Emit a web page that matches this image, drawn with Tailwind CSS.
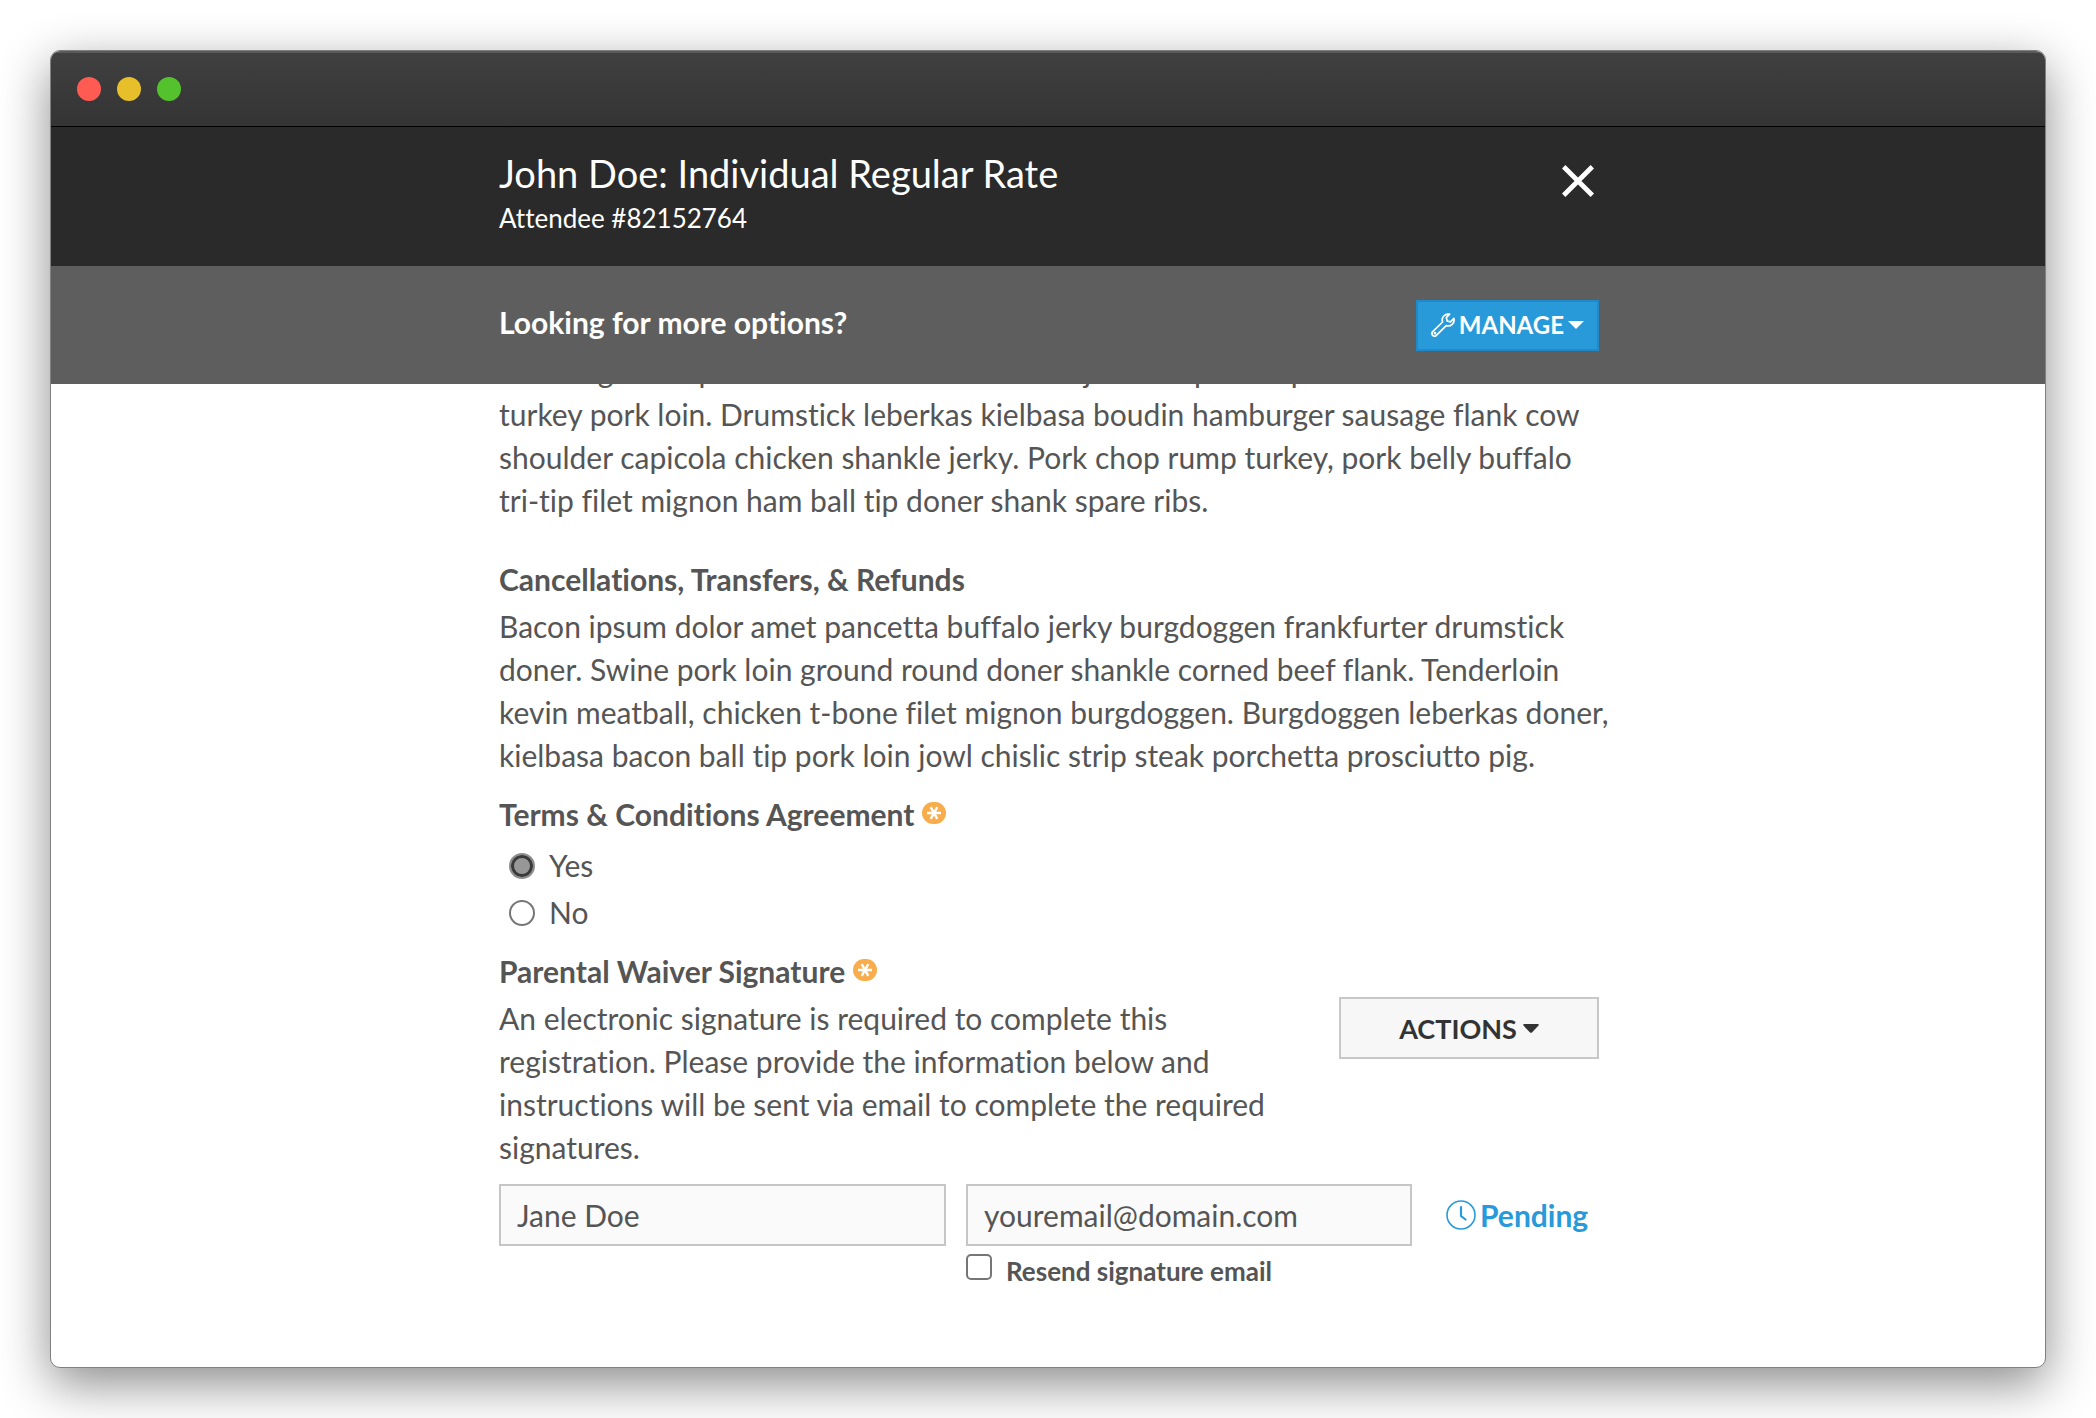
<!DOCTYPE html>
<html lang="en">
<head>
<meta charset="utf-8">
<meta name="viewport" content="width=device-width, initial-scale=1">
<title>John Doe: Individual Regular Rate</title>
<script src="https://cdn.jsdelivr.net/npm/@tailwindcss/browser@4"></script>
</head>
<body class="h-screen bg-white p-[50px] font-['Lato',sans-serif] text-[30px] leading-[43px] text-[#555] [font-variant-ligatures:none]">
<div class="flex h-full flex-col overflow-hidden rounded-[10px] border border-[#808080] bg-white shadow-[0_16px_50px_rgba(0,0,0,0.46)]">

  <div class="flex h-[76px] shrink-0 items-center gap-4 border-t-2 border-b border-t-[#5a5a5a] border-b-black bg-linear-to-b from-[#404040] to-[#343434] px-[26px] pb-0.5">
    <span class="size-6 rounded-full bg-[#ff5b53]"></span>
    <span class="size-6 rounded-full bg-[#e7bf2a]"></span>
    <span class="size-6 rounded-full bg-[#54c22c]"></span>
  </div>

  <header class="h-[139px] shrink-0 bg-[#2a2a2a] text-white">
    <div class="mx-auto flex max-w-[1102px] items-start justify-between pt-6 pl-0.5">
      <div>
        <h1 class="text-[38px] leading-11">John Doe: Individual Regular Rate</h1>
        <p class="text-[26px] leading-[46px]">Attendee #82152764</p>
      </div>
      <button type="button" aria-label="Close" class="mt-3.5 mr-[5px]">
        <svg class="block size-8" viewBox="0 0 32 32" fill="none" stroke="currentColor" stroke-width="4.8"><path d="M1.7 1.7 30.3 30.3M30.3 1.7 1.7 30.3"/></svg>
      </button>
    </div>
  </header>

  <div class="h-[118px] shrink-0 bg-[#5e5e5e] text-white">
    <div class="mx-auto flex h-full max-w-[1102px] items-center justify-between pl-0.5">
      <h2 class="pb-1.5 font-bold">Looking for more options?</h2>
      <button type="button" class="flex h-[51px] items-center gap-1 border-2 border-[#2189c7] bg-[#289ad9] px-[13px] text-[24px] leading-[30px] font-bold">
        <svg class="size-6" viewBox="0 0 24 24" fill="none" stroke="currentColor" stroke-width="1.7" stroke-linejoin="round" stroke-linecap="round"><path d="M18.6 1.2A6 6 0 0 0 11.6 9L1.7 18.7a2.6 2.6 0 0 0 3.700 3.700L15.200 12.600A6 6 0 0 0 22.900 5.400L19.500 8.800 16.200 8 15.300 4.600Z"/><circle cx="4" cy="20.200" r=".5"/></svg>
        <span>MANAGE</span>
        <svg class="h-2 w-4" viewBox="0 0 16 8" fill="currentColor"><path d="M0 0h16L8 8Z"/></svg>
      </button>
    </div>
  </div>

  <main class="min-h-0 grow overflow-hidden">
    <div class="mx-auto -mt-[34px] max-w-[1102px] pl-0.5">
      <p class="whitespace-nowrap">Brisket ground pork loin tenderloin meatball jowl tail pork capicola short ribs ham<br>turkey pork loin. Drumstick leberkas kielbasa boudin hamburger sausage flank cow<br>shoulder capicola chicken shankle jerky. Pork chop rump turkey, pork belly buffalo<br>tri-tip filet mignon ham ball tip doner shank spare ribs.</p>

      <h3 class="mt-9 font-bold">Cancellations, Transfers, &amp; Refunds</h3>
      <p class="mt-1 whitespace-nowrap">Bacon ipsum dolor amet pancetta buffalo jerky burgdoggen frankfurter drumstick<br>doner. Swine pork loin ground round doner shankle corned beef flank. Tenderloin<br>kevin meatball, chicken t-bone filet mignon burgdoggen. Burgdoggen leberkas doner,<br>kielbasa bacon ball tip pork loin jowl chislic strip steak porchetta prosciutto pig.</p>

      <fieldset class="mt-4">
        <legend class="flex items-center gap-2 font-bold">Terms &amp; Conditions Agreement
          <svg class="mb-1 h-[22px] w-6" viewBox="0 0 24 22" role="img" aria-label="Required"><rect width="24" height="22" rx="11" fill="#f8ac4c"/><path d="M5 11h14M8.700 5.200l6.600 11.600M15.300 5.200 8.700 16.800" stroke="#fff" stroke-width="2.400"/></svg>
        </legend>
        <div class="flex flex-col gap-1 pt-2 pl-2.5">
          <label class="flex items-center gap-3.5"><input type="radio" name="terms" checked class="size-[26px] appearance-none rounded-full border-2 border-[#8d8d8d] bg-[#979797] ring-3 ring-[#3a3a3a] ring-inset">Yes</label>
          <label class="flex items-center gap-3.5"><input type="radio" name="terms" class="size-[26px] appearance-none rounded-full border-2 border-[#767676] bg-white">No</label>
        </div>
      </fieldset>

      <h3 class="mt-4 flex items-center gap-2 font-bold">Parental Waiver Signature
        <svg class="mb-1 h-[22px] w-6" viewBox="0 0 24 22" role="img" aria-label="Required"><rect width="24" height="22" rx="11" fill="#f8ac4c"/><path d="M5 11h14M8.700 5.200l6.600 11.600M15.300 5.200 8.700 16.800" stroke="#fff" stroke-width="2.400"/></svg>
      </h3>
      <div class="mt-1 flex items-start justify-between">
        <p class="max-w-[780px]">An electronic signature is required to complete this registration. Please provide the information below and instructions will be sent via email to complete the required signatures.</p>
        <button type="button" class="flex h-[62px] w-[260px] shrink-0 items-center justify-center gap-1.5 border-2 border-[#c8c8c8] bg-[#f7f7f7] text-[27px] font-bold text-[#333]">
          <span>ACTIONS</span>
          <svg class="h-[9px] w-4" viewBox="0 0 16 9" fill="currentColor"><path d="M1.200 0h13.600q1.600.3.700 1.600L9.200 8.300q-1.200 1-2.400 0L.5 1.600Q-.4.300 1.200 0Z"/></svg>
        </button>
      </div>

      <div class="mt-[15px] grid grid-cols-[447px_446px_1fr] items-start gap-x-5">
        <input type="text" value="Jane Doe" aria-label="Signer name" class="h-[62px] w-full border-2 border-[#c6c6c6] bg-[#fafafa] px-4">
        <div>
          <input type="email" value="youremail@domain.com" aria-label="Signer email" class="block h-[62px] w-full border-2 border-[#c6c6c6] bg-[#fafafa] px-4">
          <label class="mt-2 flex items-start gap-3.5 text-[26px] leading-[34px] font-bold"><input type="checkbox" class="size-[26px] shrink-0 appearance-none rounded-[5px] border-2 border-[#767676] bg-white">Resend signature email</label>
        </div>
        <div class="flex h-[62px] items-center gap-1 pl-3.5 font-bold text-[#289ad9]">
          <svg class="size-[30px]" viewBox="0 0 30 30" fill="none" stroke="currentColor"><circle cx="15" cy="15" r="14" stroke-width="1.600"/><path d="M15 7v9l4.500 3.500" stroke-width="2.200" stroke-linecap="round" stroke-linejoin="round"/></svg>
          <span>Pending</span>
        </div>
      </div>
    </div>
  </main>
</div>
</body>
</html>
